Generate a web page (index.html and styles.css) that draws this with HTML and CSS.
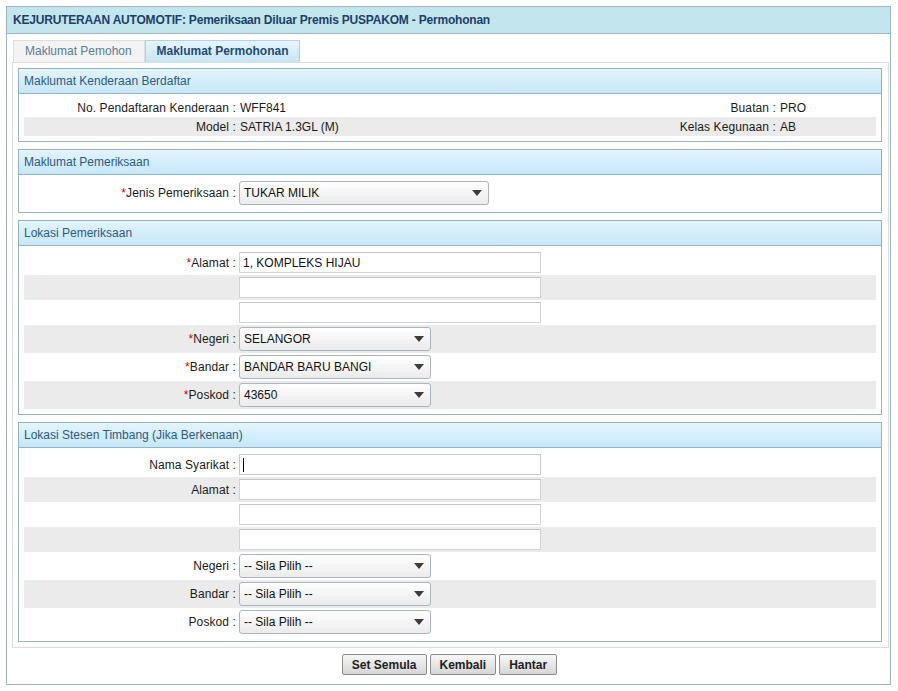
FILE: index.html
```html
<!DOCTYPE html>
<html lang="ms">
<head>
<meta charset="utf-8">
<title>Permohonan</title>
<link rel="stylesheet" href="styles.css">
</head>
<body>
<div class="outer">
  <div class="title">KEJURUTERAAN AUTOMOTIF: Pemeriksaan Diluar Premis PUSPAKOM - Permohonan</div>
  <div class="tabs">
    <div class="tab">Maklumat Pemohon</div>
    <div class="tab active">Maklumat Permohonan</div>
  </div>
  <div class="panel">
    <div class="section">
      <div class="sec-head">Maklumat Kenderaan Berdaftar</div>
      <div class="sec-body">
        <div class="row row4 text">
          <div class="lbl">No. Pendaftaran Kenderaan :</div>
          <div class="val">WFF841</div>
          <div class="lbl">Buatan :</div>
          <div class="val">PRO</div>
        </div>
        <div class="row row4 text alt">
          <div class="lbl">Model :</div>
          <div class="val">SATRIA 1.3GL (M)</div>
          <div class="lbl">Kelas Kegunaan :</div>
          <div class="val">AB</div>
        </div>
      </div>
    </div>

    <div class="section">
      <div class="sec-head">Maklumat Pemeriksaan</div>
      <div class="sec-body">
        <div class="row srow">
          <div class="lbl"><span class="req">*</span>Jenis Pemeriksaan :</div>
          <div class="val"><span class="sel w249"><select><option>TUKAR MILIK</option></select></span></div>
        </div>
      </div>
    </div>

    <div class="section">
      <div class="sec-head">Lokasi Pemeriksaan</div>
      <div class="sec-body">
        <div class="row irow">
          <div class="lbl"><span class="req">*</span>Alamat :</div>
          <div class="val"><input class="txt" type="text" value="1, KOMPLEKS HIJAU"></div>
        </div>
        <div class="row irow alt">
          <div class="lbl"></div>
          <div class="val"><input class="txt" type="text"></div>
        </div>
        <div class="row irow">
          <div class="lbl"></div>
          <div class="val"><input class="txt" type="text"></div>
        </div>
        <div class="row srow alt">
          <div class="lbl"><span class="req">*</span>Negeri :</div>
          <div class="val"><span class="sel w192"><select><option>SELANGOR</option></select></span></div>
        </div>
        <div class="row srow">
          <div class="lbl"><span class="req">*</span>Bandar :</div>
          <div class="val"><span class="sel w192"><select><option>BANDAR BARU BANGI</option></select></span></div>
        </div>
        <div class="row srow alt">
          <div class="lbl"><span class="req">*</span>Poskod :</div>
          <div class="val"><span class="sel w192"><select><option>43650</option></select></span></div>
        </div>
      </div>
    </div>

    <div class="section">
      <div class="sec-head">Lokasi Stesen Timbang (Jika Berkenaan)</div>
      <div class="sec-body">
        <div class="row irow">
          <div class="lbl">Nama Syarikat :</div>
          <div class="val"><span class="caretbox"><input class="txt focus" type="text"></span></div>
        </div>
        <div class="row irow alt">
          <div class="lbl">Alamat :</div>
          <div class="val"><input class="txt" type="text"></div>
        </div>
        <div class="row irow">
          <div class="lbl"></div>
          <div class="val"><input class="txt" type="text"></div>
        </div>
        <div class="row irow alt">
          <div class="lbl"></div>
          <div class="val"><input class="txt" type="text"></div>
        </div>
        <div class="row srow">
          <div class="lbl">Negeri :</div>
          <div class="val"><span class="sel w192"><select><option>-- Sila Pilih --</option></select></span></div>
        </div>
        <div class="row srow alt">
          <div class="lbl">Bandar :</div>
          <div class="val"><span class="sel w192"><select><option>-- Sila Pilih --</option></select></span></div>
        </div>
        <div class="row srow">
          <div class="lbl">Poskod :</div>
          <div class="val"><span class="sel w192"><select><option>-- Sila Pilih --</option></select></span></div>
        </div>
      </div>
    </div>
  </div>
  <div class="buttons">
    <button class="btn" type="button">Set Semula</button>
    <button class="btn" type="button">Kembali</button>
    <button class="btn" type="button">Hantar</button>
  </div>
</div>
</body>
</html>
```

FILE: styles.css
```css
* { box-sizing: border-box; }
html, body { background: #ffffff; }
body {
  margin: 6px;
  font-family: "Liberation Sans", Arial, sans-serif;
  font-size: 12px;
  color: #1a1a1a;
}
.outer {
  width: 885px;
  border: 1px solid #9db4c4;
  background: #fff;
}
.title {
  height: 27px;
  line-height: 26px;
  background: #c3e5ee;
  border-bottom: 1px solid #9db4c4;
  padding-left: 6px;
  font-weight: bold;
  letter-spacing: -0.2px;
  color: #1d3f68;
}
.tabs {
  display: flex;
  margin: 6px 0 0 6px;
  height: 22px;
}
.tab {
  flex: 0 0 auto;
  height: 22px;
  line-height: 21px;
  padding: 0 0 0 11px;
  width: 132px;
  background: #f3f3f3;
  border: 1px solid #dedede;
  border-bottom: none;
  color: #5b7d97;
  white-space: nowrap;
}
.tab.active {
  width: 155px;
  padding: 0;
  text-align: center;
  background: linear-gradient(#e6f5fc, #c6e6f5);
  border-color: #b3d1e2;
  font-weight: bold;
  color: #1f4b74;
}
.panel {
  margin: 0 1px 0 5px;
  border: 1px solid #dcdcdc;
  padding: 5px 6px 5px 5px;
}
.section {
  border: 1px solid #93b3c6;
  margin-top: 7px;
}
.section:first-child { margin-top: 0; }
.sec-head {
  height: 25px;
  line-height: 24px;
  padding-left: 5px;
  background: linear-gradient(#e4f4fd, #c6e7f8);
  border-bottom: 1px solid #93b3c6;
  color: #2c5b82;
}
.sec-body {
  padding: 4px 5px 5px 5px;
}
.row {
  display: grid;
  grid-template-columns: 215px 1fr;
  align-items: center;
}
.row4 { grid-template-columns: 215px 1fr 215px 97px; }
.row.alt { background: #ebebeb; }
.row.text { height: 19px; }
.row.irow { height: 25px; }
.row.srow { height: 28px; }
.lbl {
  text-align: right;
  padding-right: 3px;
  white-space: nowrap;
  letter-spacing: 0.1px;
}
.val { padding-left: 0; white-space: nowrap; }
.text .val { padding-left: 1px; }
.req { color: #d00000; }
.txt {
  display: block;
  width: 302px;
  height: 21px;
  border: 1px solid #d3d3d3;
  border-top-color: #c4c4c4;
  background: #fff;
  font-family: "Liberation Sans", Arial, sans-serif;
  font-size: 12px;
  color: #111;
  padding: 0 3px;
  margin: 0;
  outline: none;
}
.txt.focus { border-color: #c8c8c8; }
.caretbox {
  position: relative;
  display: block;
  width: 302px;
}
.caretbox::after {
  content: "";
  position: absolute;
  left: 4px;
  top: 4px;
  width: 1px;
  height: 14px;
  background: #000;
}
.sel {
  position: relative;
  display: block;
  height: 24px;
}
.sel.w249 { width: 250px; }
.sel.w192 { width: 192px; }
.sel select {
  -webkit-appearance: none;
  appearance: none;
  width: 100%;
  height: 24px;
  border: 1px solid #a9b6c1;
  border-radius: 3px;
  background: linear-gradient(#ffffff, #ebebeb);
  font-family: "Liberation Sans", Arial, sans-serif;
  font-size: 12px;
  color: #111;
  padding: 0 20px 0 4px;
  margin: 0;
  outline: none;
}
.sel::after {
  content: "";
  position: absolute;
  right: 7px;
  top: 9px;
  width: 0;
  height: 0;
  border-left: 5px solid transparent;
  border-right: 5px solid transparent;
  border-top: 6px solid #3c3c3c;
  pointer-events: none;
}
.buttons {
  display: flex;
  justify-content: center;
  gap: 3px;
  margin: 6px 0 9px 0;
  padding-left: 2px;
}
.btn {
  height: 21px;
  padding: 0 9px;
  border: 1px solid #8c8c8c;
  border-radius: 2px;
  background: linear-gradient(#f7f7f7, #d6d6d6);
  font-family: "Liberation Sans", Arial, sans-serif;
  font-size: 12px;
  font-weight: bold;
  color: #222;
  margin: 0;
}
```
